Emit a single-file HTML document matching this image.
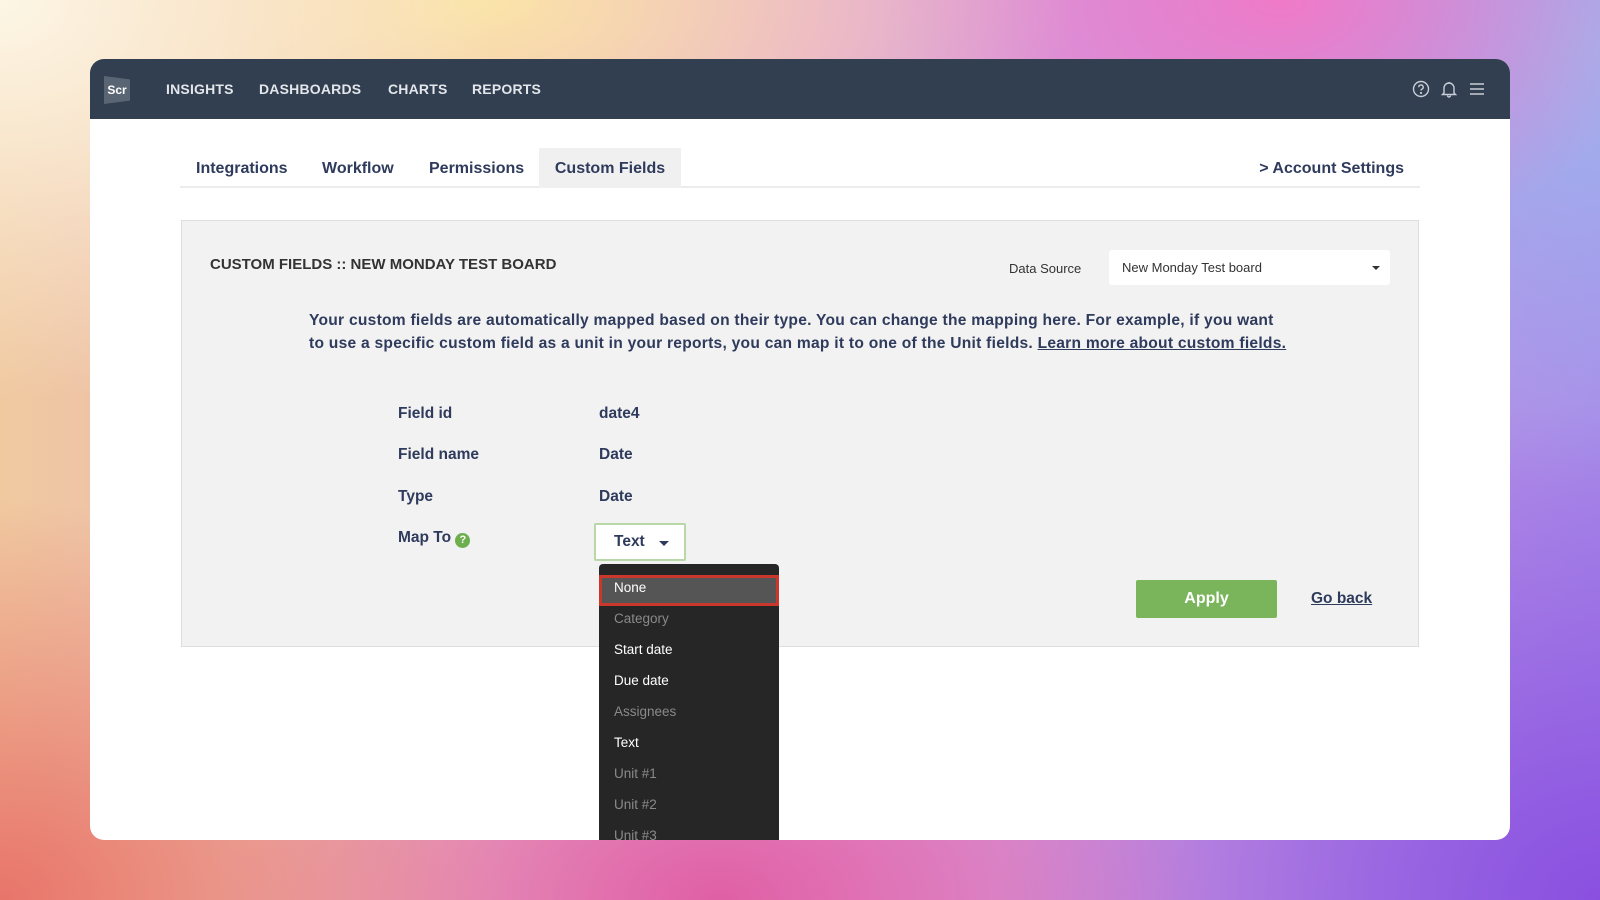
<!DOCTYPE html>
<html><head><meta charset="utf-8"><style>
*{margin:0;padding:0;box-sizing:border-box}
body{width:1600px;height:900px;overflow:hidden;font-family:"Liberation Sans",sans-serif;position:relative;
background:
radial-gradient(ellipse 500px 400px at 0% 0%, #fdf6e6 0%, rgba(253,246,230,0) 100%),
radial-gradient(ellipse 600px 300px at 30% 0%, #fbe4a8 0%, rgba(251,228,168,0) 100%),
radial-gradient(ellipse 400px 250px at 80% 0%, #f07ac8 0%, rgba(240,122,200,0) 100%),
radial-gradient(ellipse 450px 450px at 100% 5%, #9fb4ee 0%, rgba(159,180,238,0) 100%),
radial-gradient(ellipse 500px 400px at 0% 100%, #e8746a 0%, rgba(232,116,106,0) 100%),
radial-gradient(ellipse 500px 300px at 45% 100%, #e05fa5 0%, rgba(224,95,165,0) 100%),
radial-gradient(ellipse 600px 500px at 100% 100%, #8a4fe0 0%, rgba(138,79,224,0) 100%),
linear-gradient(90deg,#f0c9a0,#e4a0d8 50%,#a98be8);}
.win{position:absolute;left:90px;top:59px;width:1420px;height:781px;background:#fff;border-radius:14px;overflow:hidden}
.hdr{height:60px;background:#323f50;position:relative}
.logo{position:absolute;left:14px;top:17px;width:26px;height:28px;background:#5a6574;color:#fff;font-weight:bold;font-size:12px;line-height:28px;text-align:center;clip-path:polygon(0 0,100% 12%,100% 88%,0 100%)}
.nav{position:absolute;top:0;line-height:60px;color:#e3e6ea;font-size:14px;font-weight:bold;letter-spacing:.2px}
.icons{position:absolute;right:24px;top:21px;display:flex;gap:10px}
.tabs{position:absolute;left:90px;top:89px;width:1240px;height:40px;border-bottom:2px solid #ececec}
.tab{position:absolute;top:0;height:40px;line-height:42px;font-size:16px;color:#2f3b5c;font-weight:bold}
.panel{position:absolute;left:91px;top:161px;width:1238px;height:427px;background:#f2f2f2;border:1px solid #dedede}
.txt{position:absolute;color:#2f3b5c;white-space:nowrap}
.dd{position:absolute;width:180px;height:300px;background:#262626;border-radius:4px 4px 0 0}
.it{position:absolute;left:15px;font-size:13.5px;white-space:nowrap}
</style></head><body>
<div class="win">
 <div class="hdr">
  <div class="logo">Scr</div>
  <div class="nav" style="left:76px">INSIGHTS</div>
  <div class="nav" style="left:169px">DASHBOARDS</div>
  <div class="nav" style="left:298px">CHARTS</div>
  <div class="nav" style="left:382px">REPORTS</div>
  <div class="icons">
   <svg width="18" height="18" viewBox="0 0 18 18" fill="none" stroke="#c9ced6" stroke-width="1.4"><circle cx="9" cy="9" r="7.5"/><path d="M6.8 7.2a2.2 2.2 0 1 1 3 2c-.6.3-.8.7-.8 1.3"/><circle cx="9" cy="13" r=".4" fill="#c9ced6"/></svg>
   <svg width="18" height="18" viewBox="0 0 18 18" fill="none" stroke="#c9ced6" stroke-width="1.4"><path d="M4 13V8a5 5 0 0 1 10 0v5l1.5 1.5h-13Z"/><path d="M7.5 15.5a1.5 1.5 0 0 0 3 0"/><path d="M9 2v1"/></svg>
   <svg width="18" height="18" viewBox="0 0 18 18" fill="none" stroke="#c9ced6" stroke-width="1.4"><path d="M2 4h14M2 9h14M2 14h14"/></svg>
  </div>
 </div>
 <div class="tabs">
  <div class="tab" style="left:16px">Integrations</div>
  <div class="tab" style="left:142px">Workflow</div>
  <div class="tab" style="left:249px">Permissions</div>
  <div class="tab" style="left:359px;width:142px;background:#f0f0f0;text-align:center">Custom Fields</div>
  <div class="tab" style="right:16px">&gt; Account Settings</div>
 </div>
 <div class="panel">
  <div class="txt" style="left:28px;top:35px;font-size:15px;font-weight:bold;color:#333">CUSTOM FIELDS :: NEW MONDAY TEST BOARD</div>
  <div class="txt" style="left:827px;top:40px;font-size:13px;color:#333">Data Source</div>
  <div style="position:absolute;left:927px;top:29px;width:281px;height:35px;background:#fff;border-radius:3px;font-size:13px;color:#333;line-height:35px;padding-left:13px">New Monday Test board<span style="position:absolute;right:10px;top:16px;border:4px solid transparent;border-top:4px solid #333;border-bottom:0"></span></div>
  <div class="txt" style="left:127px;top:88px;font-size:15.6px;line-height:23px;font-weight:bold;letter-spacing:0.25px">Your custom fields are automatically mapped based on their type. You can change the mapping here. For example, if you want<br>to use a specific custom field as a unit in your reports, you can map it to one of the Unit fields. <u>Learn more about custom fields.</u></div>
  <div class="txt" style="left:216px;top:184px;font-size:15.5px;font-weight:bold">Field id</div>
  <div class="txt" style="left:417px;top:184px;font-size:15.5px;font-weight:bold">date4</div>
  <div class="txt" style="left:216px;top:225px;font-size:15.5px;font-weight:bold">Field name</div>
  <div class="txt" style="left:417px;top:225px;font-size:15.5px;font-weight:bold">Date</div>
  <div class="txt" style="left:216px;top:267px;font-size:15.5px;font-weight:bold">Type</div>
  <div class="txt" style="left:417px;top:267px;font-size:15.5px;font-weight:bold">Date</div>
  <div class="txt" style="left:216px;top:308px;font-size:15.5px;font-weight:bold">Map To <span style="display:inline-block;width:15px;height:15px;border-radius:50%;background:#6dae4f;color:#fff;font-size:11px;text-align:center;line-height:15px;vertical-align:-1px">?</span></div>
  <div style="position:absolute;left:412px;top:302px;width:92px;height:38px;background:#fff;border:2px solid #b9d8a8;border-radius:2px;font-size:15.5px;font-weight:bold;color:#2f3b5c;line-height:34px;padding-left:18px">Text<span style="position:absolute;left:63px;top:16px;border:5px solid transparent;border-top:5px solid #2f3b5c;border-bottom:0"></span></div>
  <div style="position:absolute;left:954px;top:359px;width:141px;height:38px;background:#7ab55c;border-radius:2px;color:#fff;font-size:16px;font-weight:bold;text-align:center;line-height:38px">Apply</div>
  <div class="txt" style="left:1129px;top:369px;font-size:15.5px;font-weight:bold;text-decoration:underline">Go back</div>
 </div>
 <div class="dd" style="left:509px;top:505px">
  <div style="position:absolute;left:0;top:11px;width:180px;height:31px;background:#555;border:3px solid #c9382a"></div>
  <div class="it" style="top:16px;color:#fff">None</div>
  <div class="it" style="top:47px;color:#8a8a8a">Category</div>
  <div class="it" style="top:78px;color:#fff">Start date</div>
  <div class="it" style="top:109px;color:#fff">Due date</div>
  <div class="it" style="top:140px;color:#8a8a8a">Assignees</div>
  <div class="it" style="top:171px;color:#fff">Text</div>
  <div class="it" style="top:202px;color:#8a8a8a">Unit #1</div>
  <div class="it" style="top:233px;color:#8a8a8a">Unit #2</div>
  <div class="it" style="top:264px;color:#8a8a8a">Unit #3</div>
 </div>
</div>
</body></html>
